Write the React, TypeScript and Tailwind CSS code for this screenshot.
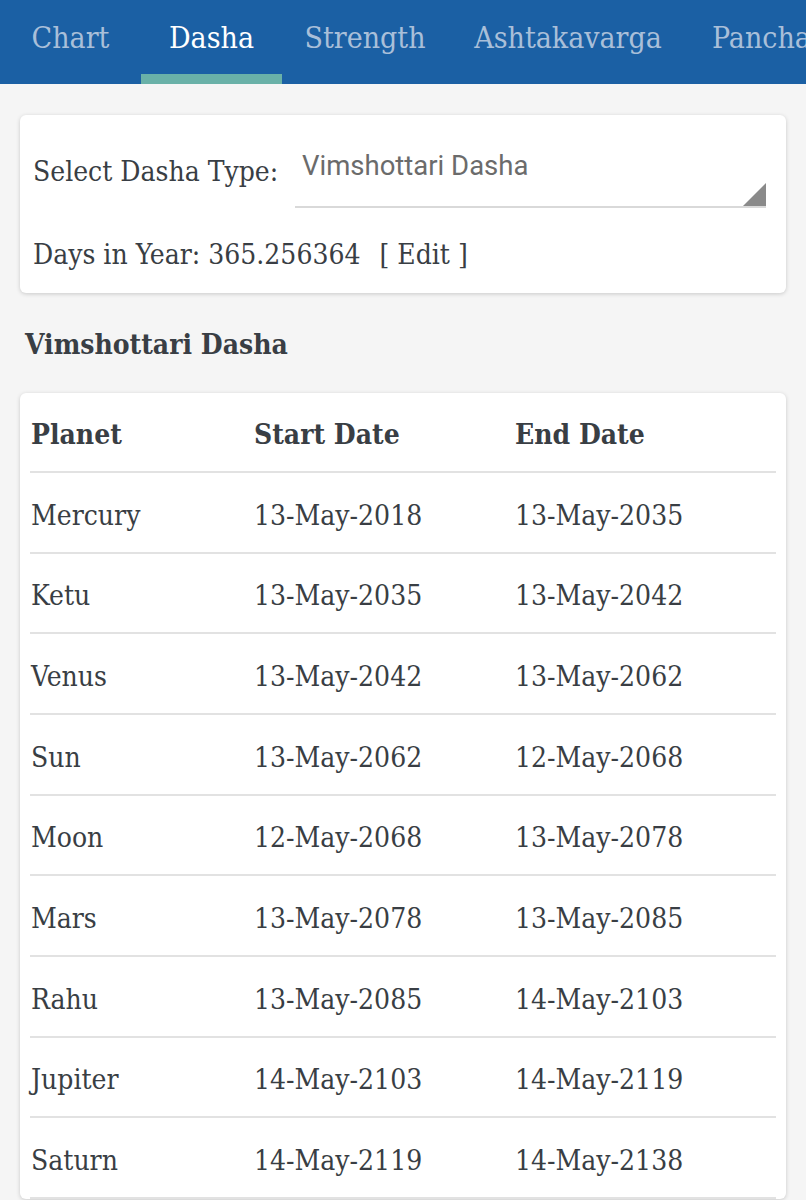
import React from "react";

const rows = [
  ["Mercury", "13-May-2018", "13-May-2035"],
  ["Ketu", "13-May-2035", "13-May-2042"],
  ["Venus", "13-May-2042", "13-May-2062"],
  ["Sun", "13-May-2062", "12-May-2068"],
  ["Moon", "12-May-2068", "13-May-2078"],
  ["Mars", "13-May-2078", "13-May-2085"],
  ["Rahu", "13-May-2085", "14-May-2103"],
  ["Jupiter", "14-May-2103", "14-May-2119"],
  ["Saturn", "14-May-2119", "14-May-2138"],
];

const tabs: [string, string][] = [
  ["Chart", "w-[141px]"],
  ["Dasha", "w-[141px]"],
  ["Strength", "w-[166px]"],
  ["Ashtakavarga", "w-[240px]"],
  ["Panchang", "w-[180px]"],
];

export default function App() {
  return (
    <div
      className="w-[806px] h-[1200px] overflow-hidden bg-[#f5f5f5] text-[#393e44]"
      style={{ fontFamily: '"DejaVu Serif", serif', fontStretch: "condensed" }}
    >
      <div className="h-[84px] bg-[#1b60a4] flex whitespace-nowrap overflow-hidden">
        {tabs.map(([t, w], i) => (
          <div
            key={t}
            className={`relative h-full flex items-center justify-center shrink-0 ${w} ${
              i === 1 ? "text-white" : "text-[#a9bfd9]"
            } ${i === 4 ? "justify-start pl-[24px]" : ""}`}
          >
            <span className="text-[30px] leading-none -mt-[8px]">{t}</span>
            {i === 1 && <div className="absolute left-0 right-0 bottom-0 h-[10px] bg-[#6ab1a8]" />}
          </div>
        ))}
      </div>

      <div className="px-[20px] pt-[31px]">
        <div className="bg-white rounded-[6px] shadow-[0_1px_4px_rgba(0,0,0,0.18)] h-[178px] pl-[13px] pr-[20px] flex flex-col">
          <div className="flex items-start pt-[40px]">
            <span className="text-[28px] leading-none mt-[3px] w-[262px] shrink-0">Select Dasha Type:</span>
            <div className="relative flex-1 h-[53px] border-b-2 border-[#d9d9d9]">
              <span
                className="block pl-[7px] -mt-[3px] text-[27.5px] leading-none text-[#6b6b6b]"
                style={{ fontFamily: "Roboto, sans-serif", fontStretch: "normal" }}
              >
                Vimshottari Dasha
              </span>
              <div className="absolute right-0 bottom-0 w-0 h-0 border-l-[23px] border-l-transparent border-b-[23px] border-b-[#8a8a8a]" />
            </div>
          </div>
          <div className="mt-[33px] text-[28px] leading-none whitespace-nowrap">
            <span>Days in Year: 365.256364</span>
            <span className="ml-[19px]">[ Edit ]</span>
          </div>
        </div>

        <div className="pl-[5px] pt-[37px] pb-[33px] text-[28px] leading-[30px] font-bold">Vimshottari Dasha</div>

        <div className="bg-white rounded-[6px] shadow-[0_1px_4px_rgba(0,0,0,0.18)] px-[10px]">
          <div className="flex items-center h-[80px] pt-[6px] border-b-2 border-[#e2e2e2] font-bold text-[28px]">
            <div className="w-[224px] pl-[1px] shrink-0">Planet</div>
            <div className="w-[261px] shrink-0">Start Date</div>
            <div>End Date</div>
          </div>
          {rows.map((r) => (
            <div key={r[0]} className="flex items-center h-[80.67px] pt-[7px] border-b-2 border-[#e2e2e2] text-[28px]">
              <div className="w-[224px] pl-[1px] shrink-0">{r[0]}</div>
              <div className="w-[261px] shrink-0">{r[1]}</div>
              <div>{r[2]}</div>
            </div>
          ))}
        </div>
      </div>
    </div>
  );
}
